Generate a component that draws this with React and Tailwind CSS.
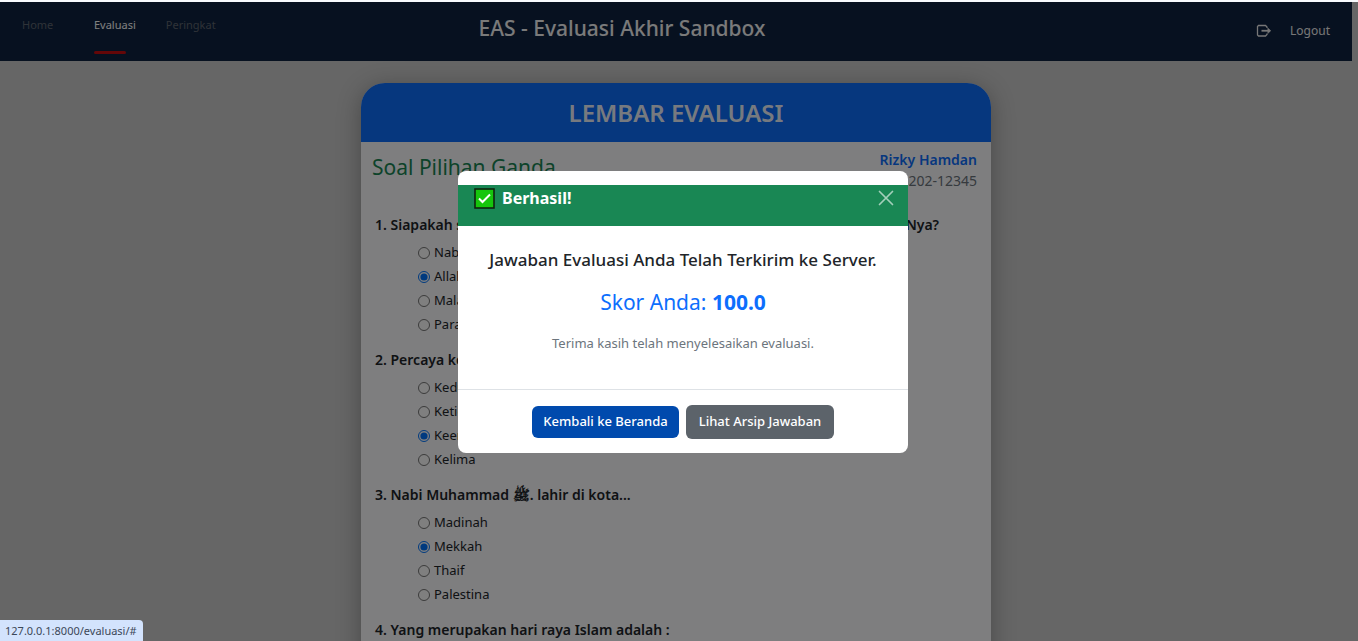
import React from "react";

const questions = [
  {
    id: "q1",
    text: "1. Siapakah satu-satunya Dzat yang wajib disembah seluruh makhluk ciptaan-Nya?",
    options: ["Nabi", "Allah", "Malaikat", "Para Wali"],
    answer: 1,
  },
  {
    id: "q2",
    text: "2. Percaya kepada Malaikat adalah rukun iman ke...",
    options: ["Kedua", "Ketiga", "Keempat", "Kelima"],
    answer: 2,
  },
  {
    id: "q3",
    text: "3. Nabi Muhammad ﷺ. lahir di kota...",
    options: ["Madinah", "Mekkah", "Thaif", "Palestina"],
    answer: 1,
  },
  {
    id: "q4",
    text: "4. Yang merupakan hari raya Islam adalah :",
    options: [],
  },
];

function NavBar() {
  return (
    <header className="mr-1.5 grid h-[59px] grid-cols-3 bg-[#0e2240] text-white">
      <nav className="flex gap-[30px] pl-[22px] pt-[11px] text-[11px]">
        <a href="#home" className="h-10 w-[42px] leading-6 text-[#5e6670]">Home</a>
        <a href="#evaluasi" className="flex h-[41px] flex-col items-start justify-between leading-6">
          Evaluasi
          <span className="h-[3px] w-8 rounded-sm bg-[#c80e10]" />
        </a>
        <a href="#peringkat" className="h-10 leading-6 text-[#5e6670]">Peringkat</a>
      </nav>
      <h1 className="-ml-[108px] whitespace-nowrap pt-2.5 text-center text-[21px] font-medium leading-8 text-[#f4f4f4]">
        EAS - Evaluasi Akhir Sandbox
      </h1>
      <a href="#logout" className="flex items-center justify-end gap-[18px] pb-0.5 pr-[22px] text-xs text-[#eeeeee]">
        <svg viewBox="0 0 16 14" className="h-3.5 w-4" fill="none" stroke="currentColor" strokeWidth="1.3" aria-hidden="true">
          <path d="M11 4V3L9.500 1.500H2.500L1.500 2.500V11L2.500 12H9.500L11 10.500V9.500" />
          <path d="M5.500 6.750H14" strokeWidth="1.800" />
          <path d="M11.800 4L14.800 6.750L11.800 9.500Z" fill="currentColor" strokeWidth="0.500" />
        </svg>
        Logout
      </a>
    </header>
  );
}

function Question({ question }) {
  return (
    <fieldset className="mb-[11px]">
      <legend className="mb-1 whitespace-nowrap text-sm font-semibold leading-6">{question.text}</legend>
      {question.options.map((option, i) => (
        <label key={option} className="ml-[43px] flex h-6 w-fit items-center gap-1">
          <input type="radio" name={question.id} defaultChecked={i === question.answer} className="size-3" />
          {option}
        </label>
      ))}
    </fieldset>
  );
}

function Sheet() {
  return (
    <main className="mx-auto mt-[22px] min-h-screen w-full max-w-[630px] rounded-t-3xl bg-[#fcfcff] shadow-[0_4px_24px_rgba(0,0,0,0.3)]">
      <h2 className="rounded-t-3xl bg-[#0d6efd] py-[5px] text-center text-2xl font-semibold leading-[49px] text-white/95">
        LEMBAR EVALUASI
      </h2>
      <div className="flex justify-between pb-px pl-[11px] pr-3.5 pt-[7px]">
        <h3 className="pt-px text-[21px] leading-[34px] text-[#198754]">Soal Pilihan Ganda</h3>
        <div className="text-right text-sm leading-[21px]">
          <p className="font-semibold text-[#0d6efd]">Rizky Hamdan</p>
          <p className="text-[#6c757d]">202-12345</p>
        </div>
      </div>
      <form className="pl-3.5 pt-[21px] text-[13px] text-[#212529]">
        {questions.map((q) => (
          <Question key={q.id} question={q} />
        ))}
      </form>
    </main>
  );
}

function SuccessDialog() {
  return (
    <div className="fixed inset-x-0 bottom-0 top-0.5 flex items-start justify-center bg-black/50 pl-2 pt-[169px]">
      <section role="dialog" aria-labelledby="dialog-title" className="w-full max-w-[450px] rounded-lg bg-white pt-3.5 text-[#212529]">
        <header className="flex h-[41px] items-start justify-between bg-[#198754] pl-4 pr-3.5 pt-0.5">
          <div className="flex items-center gap-[7px]">
            <svg viewBox="0 0 21 21" className="size-[21px]" aria-hidden="true">
              <rect x="1" y="1" width="19" height="19" fill="#16c60c" stroke="#10240f" strokeWidth="1.600" />
              <path d="M5 10.500L8.500 14L16 6.500" fill="none" stroke="#fff" strokeWidth="2" />
            </svg>
            <h2 id="dialog-title" className="text-base font-bold leading-[22px] text-white">Berhasil!</h2>
          </div>
          <button type="button" aria-label="Tutup" className="pt-[3px] text-white/60">
            <svg viewBox="0 0 16 16" className="size-4" fill="none" stroke="currentColor" strokeWidth="1.700" strokeLinecap="round" aria-hidden="true">
              <path d="M1.500 1.500L14.500 14.500M14.500 1.500L1.500 14.500" />
            </svg>
          </button>
        </header>
        <div className="border-b border-[#dee2e6] pb-[35px] pt-5 text-center">
          <p className="text-[17px] font-medium leading-7">Jawaban Evaluasi Anda Telah Terkirim ke Server.</p>
          <p className="mt-3 text-[21px] leading-8 text-[#0d6efd]">
            Skor Anda: <strong className="font-bold">100.0</strong>
          </p>
          <p className="mt-[15px] text-[13px] leading-[21px] text-[#6c757d]">Terima kasih telah menyelesaikan evaluasi.</p>
        </div>
        <footer className="flex items-center justify-center gap-[7px] pb-3.5 pt-[15px] text-[13px] font-medium text-white">
          <button type="button" className="h-8 w-[147px] rounded-md bg-[#004aad]">Kembali ke Beranda</button>
          <button type="button" className="h-[34px] w-[148px] rounded-md bg-[#5c636a]">Lihat Arsip Jawaban</button>
        </footer>
      </section>
    </div>
  );
}

export default function App() {
  return (
    <div className="h-screen overflow-hidden bg-[#cccccc] pt-0.5 font-['Noto_Sans','DejaVu_Sans',sans-serif]">
      <div className="fixed inset-x-0 top-0 h-0.5 bg-[#f8fafd]" />
      <NavBar />
      <div className="mr-1.5">
        <Sheet />
      </div>
      <SuccessDialog />
      <div className="fixed bottom-0 left-0 rounded-tr bg-[#d3e3fd] pl-[5px] pr-1.5 text-[11px] leading-[21px] text-[#3c4758]">
        127.0.0.1:8000/evaluasi/#
      </div>
    </div>
  );
}
